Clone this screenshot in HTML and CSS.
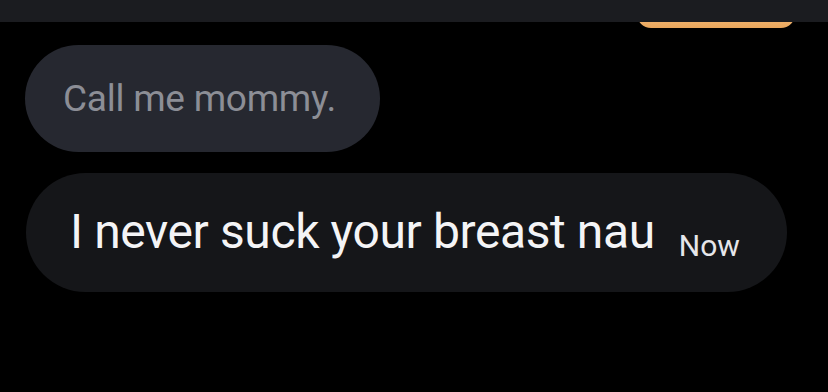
FILE: index.html
```html
<!DOCTYPE html>
<html lang="en">
<head>
    <meta charset="UTF-8">
    <meta name="viewport" content="width=device-width, initial-scale=1.0">
    <title>Messages</title>
    <link rel="stylesheet" href="styles.css">
</head>
<body>

<div class="top-bar">
    <div class="reaction-pill"></div>
</div>

<div class="thread">
    <div class="bubble bubble-faded">
        <span class="bubble-text">Call me mommy.</span>
    </div>

    <div class="bubble bubble-main">
        <span class="bubble-text">I never suck your breast nau</span>
        <span class="timestamp">Now</span>
    </div>
</div>

</body>
</html>
```

FILE: styles.css
```css
body {
    font-family: Roboto, 'Liberation Sans', Arial, sans-serif;
    background-color: #000;
    margin: 0;
    padding: 0;
    width: 828px;
    height: 392px;
    overflow: hidden;
}
.top-bar {
    position: relative;
    height: 22px;
    background-color: #1b1c20;
}
.reaction-pill {
    position: absolute;
    left: 637px;
    top: 10px;
    width: 158px;
    height: 18px;
    border-radius: 0 0 14px 14px;
    background: linear-gradient(#f9c384, #e9a65c);
    z-index: -1;
}
.top-bar::after {
    content: '';
    position: absolute;
    left: 0;
    right: 0;
    top: 0;
    height: 22px;
    background-color: #1b1c20;
}
.thread {
    display: flex;
    flex-direction: column;
    align-items: flex-start;
    padding-left: 25px;
}
.bubble {
    display: flex;
    align-items: center;
    box-sizing: border-box;
}
.bubble-faded {
    margin-top: 23px;
    width: 355px;
    height: 107px;
    padding-left: 38px;
    border-radius: 54px;
    background-color: #262830;
}
.bubble-faded .bubble-text {
    font-size: 37px;
    color: #8c8e96;
    letter-spacing: -0.25px;
}
.bubble-main {
    margin-top: 21px;
    margin-left: 1px;
    width: 761px;
    height: 119px;
    padding-left: 44px;
    border-radius: 60px;
    background-color: #151619;
    align-items: baseline;
    padding-top: 30px;
}
.bubble-main .bubble-text {
    font-size: 48px;
    color: #f4f4f6;
    letter-spacing: -0.4px;
}
.timestamp {
    font-size: 30px;
    color: #e6e6ea;
    margin-left: 24px;
    position: relative;
    top: 8px;
}
```
